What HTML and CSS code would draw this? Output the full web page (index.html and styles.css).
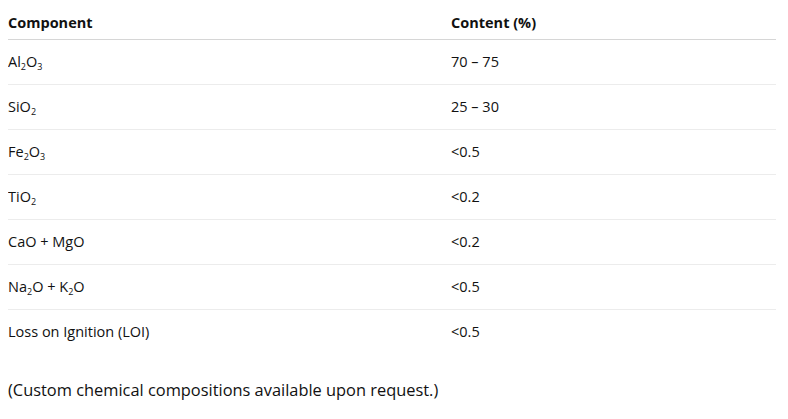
FILE: index.html
```html
<!DOCTYPE html>
<html>
<head>
<meta charset="utf-8">
<link rel="stylesheet" href="styles.css">
</head>
<body>
<table class="comp">
  <thead>
    <tr><th>Component</th><th>Content (%)</th></tr>
  </thead>
  <tbody>
    <tr><td>Al<sub>2</sub>O<sub>3</sub></td><td>70 – 75</td></tr>
    <tr><td>SiO<sub>2</sub></td><td>25 – 30</td></tr>
    <tr><td>Fe<sub>2</sub>O<sub>3</sub></td><td>&lt;0.5</td></tr>
    <tr><td>TiO<sub>2</sub></td><td>&lt;0.2</td></tr>
    <tr><td>CaO + MgO</td><td>&lt;0.2</td></tr>
    <tr><td>Na<sub>2</sub>O + K<sub>2</sub>O</td><td>&lt;0.5</td></tr>
    <tr><td>Loss on Ignition (LOI)</td><td>&lt;0.5</td></tr>
  </tbody>
</table>
<p class="note">(Custom chemical compositions available upon request.)</p>
</body>
</html>
```
FILE: styles.css
```css
html, body {
  background: #ffffff;
}
body {
  margin: 0 12px 0 8px;
  font-family: "Open Sans", "Noto Sans", sans-serif;
  color: #111111;
}
.comp {
  width: 768px;
  border-collapse: collapse;
  font-size: 14.5px;
}
.comp th, .comp td {
  text-align: left;
  padding: 0;
  vertical-align: middle;
}
.comp th {
  font-weight: 700;
  padding-top: 6px;
  border-bottom: 1px solid #d6d6d6;
  box-sizing: border-box;
  height: 39px;
}
.comp th:first-child, .comp td:first-child {
  width: 443px;
}
.comp td {
  height: 44px;
  border-bottom: 1px solid #ececec;
}
.comp tbody tr:last-child td {
  border-bottom: none;
}
.comp sub {
  font-size: 9px;
  vertical-align: -3px;
  line-height: 0;
}
.note {
  margin: 24px 0 0 0;
  font-size: 16.4px;
}
```
